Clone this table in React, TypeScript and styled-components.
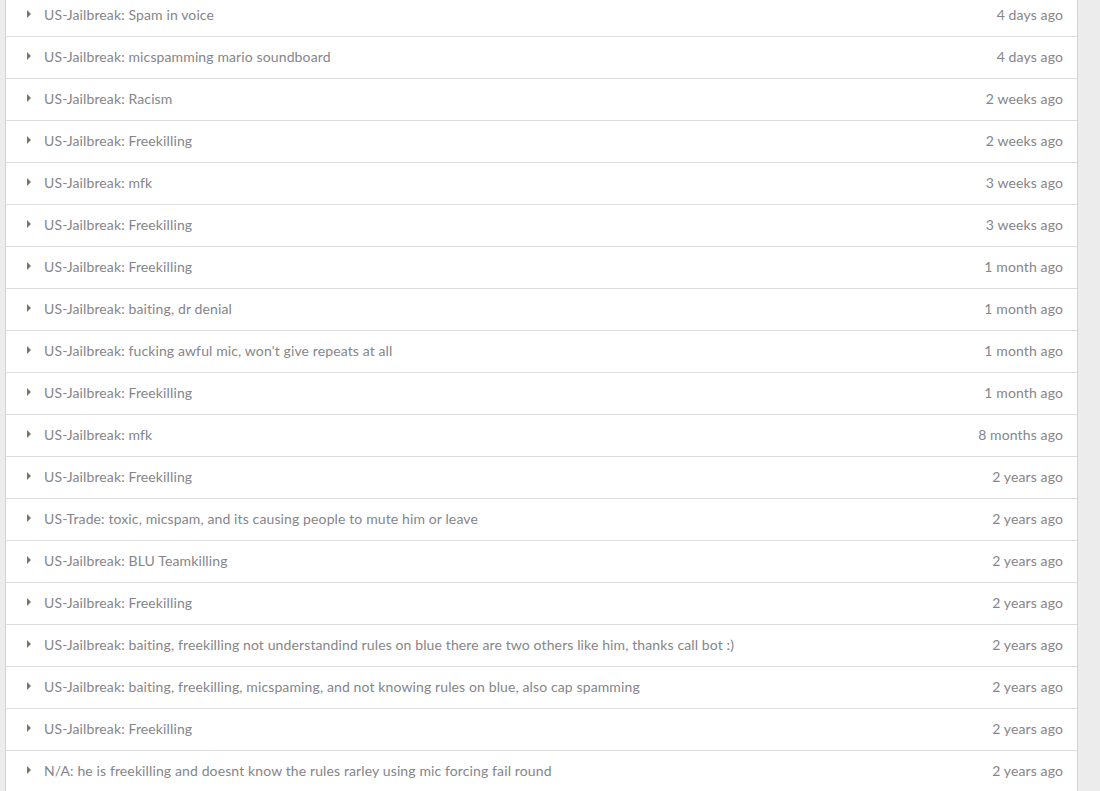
import React from 'react';
import styled, { createGlobalStyle } from 'styled-components';

const GlobalStyle = createGlobalStyle`
  html, body {
    margin: 0;
    padding: 0;
    background: #ececec;
    font-family: Lato, "Open Sans", sans-serif;
    overflow: hidden;
  }
`;

const Page = styled.div`
  height: 791px;
  overflow: hidden;
`;

const Panel = styled.ul`
  list-style: none;
  margin: -5px 0 0 5px;
  padding: 0;
  width: 1071px;
  background: #fff;
  border-left: 1px solid #d2d2d2;
  border-right: 1px solid #d2d2d2;
`;

const Row = styled.li`
  display: flex;
  align-items: center;
  box-sizing: border-box;
  height: 42px;
  border-bottom: 1px solid #dddddd;
  padding: 0 14px 2px 21px;
  font-size: 14px;
  letter-spacing: 0.12px;
  color: #85858a;
  cursor: pointer;
`;

const Caret = styled.span`
  width: 0;
  height: 0;
  border-top: 4px solid transparent;
  border-bottom: 4px solid transparent;
  border-left: 4px solid #7c7468;
  margin-right: 13px;
  margin-top: -1px;
`;

const Title = styled.span`
  flex: 1;
  white-space: nowrap;
  overflow: hidden;
  text-overflow: ellipsis;
`;

const When = styled.span`
  white-space: nowrap;
  margin-left: 16px;
`;

const reports: [string, string][] = [
  ['US-Jailbreak: Spam in voice', '4 days ago'],
  ['US-Jailbreak: micspamming mario soundboard', '4 days ago'],
  ['US-Jailbreak: Racism', '2 weeks ago'],
  ['US-Jailbreak: Freekilling', '2 weeks ago'],
  ['US-Jailbreak: mfk', '3 weeks ago'],
  ['US-Jailbreak: Freekilling', '3 weeks ago'],
  ['US-Jailbreak: Freekilling', '1 month ago'],
  ['US-Jailbreak: baiting, dr denial', '1 month ago'],
  ["US-Jailbreak: fucking awful mic, won't give repeats at all", '1 month ago'],
  ['US-Jailbreak: Freekilling', '1 month ago'],
  ['US-Jailbreak: mfk', '8 months ago'],
  ['US-Jailbreak: Freekilling', '2 years ago'],
  ['US-Trade: toxic, micspam, and its causing people to mute him or leave', '2 years ago'],
  ['US-Jailbreak: BLU Teamkilling', '2 years ago'],
  ['US-Jailbreak: Freekilling', '2 years ago'],
  ['US-Jailbreak: baiting, freekilling not understandind rules on blue there are two others like him, thanks call bot :)', '2 years ago'],
  ['US-Jailbreak: baiting, freekilling, micspaming, and not knowing rules on blue, also cap spamming', '2 years ago'],
  ['US-Jailbreak: Freekilling', '2 years ago'],
  ['N/A: he is freekilling and doesnt know the rules rarley using mic forcing fail round', '2 years ago'],
];

export default function App() {
  return (
    <Page>
      <GlobalStyle />
      <Panel>
        {reports.map(([title, when], i) => (
          <Row key={i}>
            <Caret />
            <Title>{title}</Title>
            <When>{when}</When>
          </Row>
        ))}
      </Panel>
    </Page>
  );
}
